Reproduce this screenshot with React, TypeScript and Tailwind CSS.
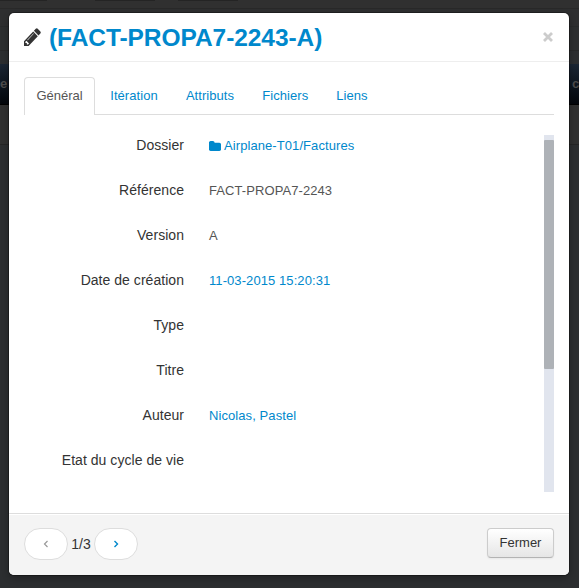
import React from 'react';

const tabs = [
  { label: 'Itération', cls: 'w-[74px]' },
  { label: 'Attributs', cls: 'w-[78px]' },
  { label: 'Fichiers', cls: 'w-[72.5px]' },
  { label: 'Liens', cls: 'w-[61px]' },
];

const rows: { label: string; value?: string; link?: boolean; folder?: boolean }[] = [
  { label: 'Dossier', value: 'Airplane-T01/Factures', link: true, folder: true },
  { label: 'Référence', value: 'FACT-PROPA7-2243' },
  { label: 'Version', value: 'A' },
  { label: 'Date de création', value: '11-03-2015 15:20:31', link: true },
  { label: 'Type' },
  { label: 'Titre' },
  { label: 'Auteur', value: 'Nicolas, Pastel', link: true },
  { label: 'Etat du cycle de vie' },
];

function Pencil() {
  return (
    <svg viewBox="0 0 1536 1536" preserveAspectRatio="none" className="mt-[15px] h-[18px] w-[17px] shrink-0 fill-[#333]">
      <path d="M363 1408l91-91-235-235-91 91v107h128v128h107zM886 480q0-22-22-22-10 0-17 7l-542 542q-7 7-7 17 0 22 22 22 10 0 17-7l542-542q7-7 7-17zM832 288l416 416-832 832H0v-416zM1515 384q0 53-37 90l-166 166L896 224l166-165q36-38 90-38 53 0 91 38l235 234q37 39 37 91z" />
    </svg>
  );
}

function Folder() {
  return (
    <svg viewBox="0 128 1664 1408" preserveAspectRatio="none" className="mr-[3px] -mt-px h-[10px] w-[12px] shrink-0 fill-[#0088cc]">
      <path d="M1664 608v704q0 92-66 158t-158 66H224q-92 0-158-66T0 1312V352q0-92 66-158t158-66h320q92 0 158 66t66 158v32h672q92 0 158 66t66 158z" />
    </svg>
  );
}

function Backdrop() {
  return (
    <div className="flex h-full flex-col bg-[#2c2e30]">
      <div className="flex h-px shrink-0 bg-[#303030]">
        <div className="w-[47px] bg-[#242424]" />
        <div className="ml-[48px] w-[60px] bg-[#242424]" />
        <div className="ml-[23px] w-[60px] bg-[#242424]" />
      </div>
      <div className="h-[8px] shrink-0 border-b border-[#292929] bg-[#303030]" />
      <div className="h-[18px] shrink-0 border-b border-[#292b2c] bg-[#2e2f30]" />
      <div className="h-[24px] shrink-0 border-b border-[#272829] bg-[#2d2f30]" />
      <div className="h-[13px] shrink-0 bg-[#2c2e30]" />
      <div className="flex h-[41px] shrink-0 items-center justify-between overflow-hidden border-b border-black bg-linear-to-b from-[#1b2634] to-[#04070c] text-[13px] font-bold text-[#4b4b4b]">
        <span>e</span>
        <span className="w-[7px]">c</span>
      </div>
      <div className="h-[40px] shrink-0 border-b border-[#252525] bg-[#303030]" />
    </div>
  );
}

export default function App() {
  return (
    <div className="relative h-[588px] w-[579px] overflow-hidden font-['Liberation_Sans',Arial,sans-serif] text-[14px] text-[#333]">
      <Backdrop />
      <div className="absolute top-[13px] left-[9px] flex h-[562px] w-[560px] flex-col overflow-hidden rounded-[5px] bg-white shadow-[0_0_0_1px_rgba(0,0,0,0.3),0_3px_7px_rgba(0,0,0,0.3)]">
        <header className="flex h-[49px] shrink-0 border-b border-[#eee] px-[15px]">
          <Pencil />
          <h1 className="ml-[8px] pt-[7px] text-[24.5px] leading-[36px] font-bold tracking-[-0.06px] whitespace-nowrap text-[#0088cc]">
            (FACT-PROPA7-2243-A)
          </h1>
          <button aria-label="Fermer" className="mt-[19px] mr-px ml-auto h-[10px] w-[10px] self-start">
            <svg viewBox="0 0 10 10" className="h-[10px] w-[10px] stroke-[#ccc]">
              <path d="M1 1l8 8M9 1L1 9" strokeWidth="2.8" />
            </svg>
          </button>
        </header>

        <nav className="mx-[15px] mt-[15px] flex h-[38px] shrink-0 border-b border-[#ddd] text-[13px] leading-[20px]">
          <div className="mr-[2px] h-[38px] w-[71px] rounded-t-[4px] border border-b-0 border-[#ddd] bg-white pt-[8px] text-center text-[#555]">
            Général
          </div>
          {tabs.map((tab) => (
            <div key={tab.label} className={`${tab.cls} h-[37px] pt-[9px] text-center tracking-[0.06px] text-[#0088cc]`}>
              {tab.label}
            </div>
          ))}
        </nav>

        <div className="mx-[15px] mt-[20px] flex h-[357px] shrink-0">
          <div className="flex flex-1 flex-col overflow-hidden">
            {rows.map((row) => (
              <div key={row.label} className="flex h-[45px] shrink-0 leading-[20px] whitespace-nowrap">
                <div className="w-[160px] text-right text-[14px] tracking-[0.04px]">{row.label}</div>
                <div className={`ml-[25px] flex h-[21px] items-center pt-px text-[13px] tracking-[0.08px] ${row.link ? 'text-[#0088cc]' : 'text-[#555]'}`}>
                  {row.folder && <Folder />}
                  {row.value}
                </div>
              </div>
            ))}
          </div>
          <div className="w-[10px] bg-[#e1e5ee] pt-[5px]">
            <div className="h-[229px] rounded-[1px] bg-[#aeb2b7]" />
          </div>
        </div>

        <footer className="mt-[21px] flex h-[62px] shrink-0 border-t border-[#ddd] bg-[#f4f4f4] px-[15px] pt-[14px] shadow-[inset_0_1px_0_#fff]">
          <button className="flex h-[32px] w-[44px] items-center justify-center rounded-full border border-[#ddd] bg-white">
            <svg viewBox="0 0 6 8" className="h-[8px] w-[6px] fill-none stroke-[#999]"><path d="M4.5 1L1.5 4l3 3" strokeWidth="1.2" /></svg>
          </button>
          <span className="w-[26px] text-center leading-[32px]">1/3</span>
          <button className="flex h-[32px] w-[44px] items-center justify-center rounded-full border border-[#ddd] bg-white">
            <svg viewBox="0 0 6 8" className="h-[8px] w-[6px] fill-none stroke-[#0088cc]"><path d="M1.5 1l3 3-3 3" strokeWidth="1.4" /></svg>
          </button>
          <button className="ml-auto h-[30px] w-[67px] rounded-[4px] border border-[#ccc] border-b-[#b3b3b3] bg-linear-to-b from-white to-[#e6e6e6] text-[13px] leading-[28px] shadow-[0_1px_2px_rgba(0,0,0,0.05)]">
            Fermer
          </button>
        </footer>
      </div>
    </div>
  );
}
